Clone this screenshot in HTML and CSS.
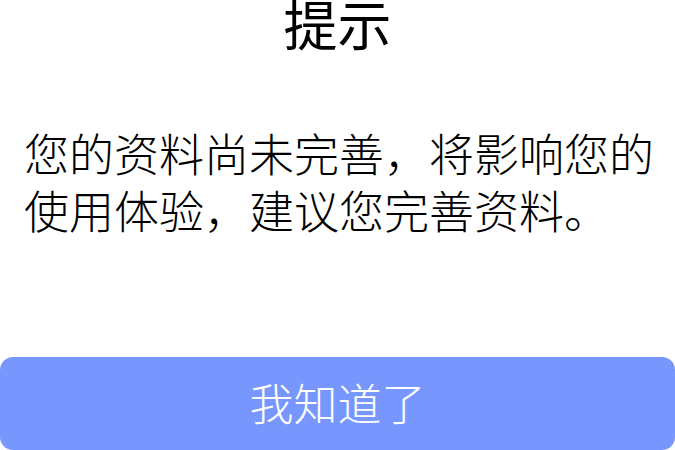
FILE: index.html
```html
<!DOCTYPE html>
<html lang="zh">
<head>
<meta charset="utf-8">
<link rel="stylesheet" href="styles.css">
</head>
<body>
<div class="dialog">
  <h1 class="title">提示</h1>
  <p class="message">您的资料尚未完善，将影响您的使用体验，建议您完善资料。</p>
  <button class="confirm">我知道了</button>
</div>
</body>
</html>
```
FILE: styles.css
```css
html, body {
  margin: 0;
  padding: 0;
  background: #ffffff;
}
.dialog {
  width: 675px;
  height: 450px;
  display: flex;
  flex-direction: column;
  font-family: "Noto Sans CJK SC", "Noto Sans", sans-serif;
  color: #000;
}
.title {
  margin: 0;
  height: 46px;
  font-size: 54px;
  font-weight: 400;
  line-height: 46px;
  text-align: center;
}
.message {
  margin: 78px 0 0 0;
  padding: 0 18px 0 24px;
  font-size: 45px;
  font-weight: 300;
  line-height: 57px;
  letter-spacing: 0;
}
.confirm {
  margin-top: auto;
  height: 93px;
  width: 675px;
  border: none;
  border-radius: 13px;
  background: #7797ff;
  color: #ffffff;
  font-family: "Noto Sans CJK SC", "Noto Sans", sans-serif;
  font-size: 44px;
  font-weight: 300;
  padding: 0 0 4px 0;
}
```
